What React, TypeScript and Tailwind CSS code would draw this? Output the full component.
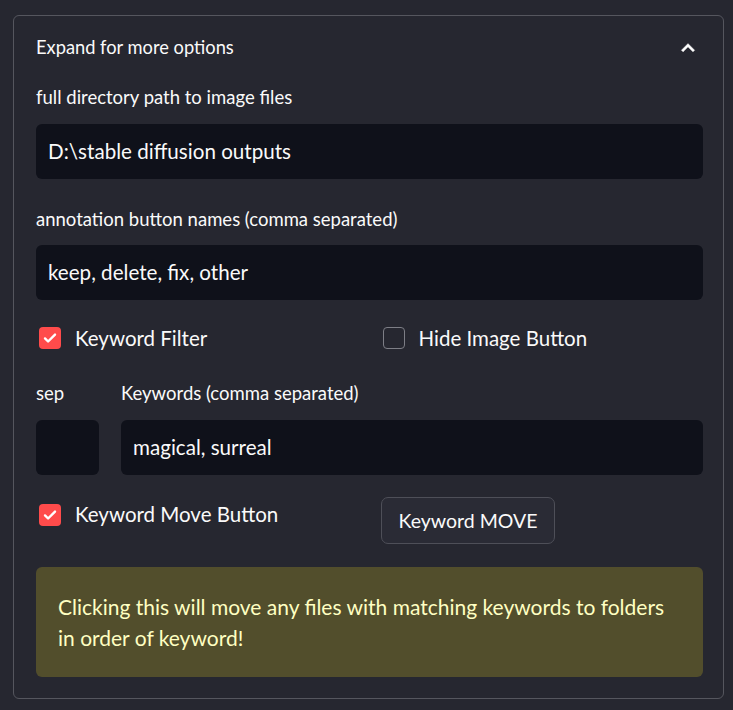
import React from 'react';

const font = { fontFamily: 'Lato, "Noto Sans", sans-serif' };

const Check: React.FC<{ checked?: boolean }> = ({ checked }) =>
  checked ? (
    <span className="flex h-[22px] w-[22px] shrink-0 items-center justify-center rounded-[4px] bg-[#ff4b4b]">
      <svg viewBox="0 0 16 16" className="h-[16px] w-[16px]" fill="none">
        <path d="M3 8.4l3.1 3.1L13 4.6" stroke="#ffffff" strokeWidth="2.4" strokeLinecap="round" strokeLinejoin="round" />
      </svg>
    </span>
  ) : (
    <span className="h-[22px] w-[22px] shrink-0 rounded-[4px] border-[1.5px] border-[#7d7e86] bg-[#262730]" />
  );

const Label: React.FC<{ children: React.ReactNode }> = ({ children }) => (
  <div className="mb-[15px] h-[24px] text-[18.5px] leading-[24px] text-[#fafafa]">{children}</div>
);

const Field: React.FC<{ value: string; className?: string }> = ({ value, className }) => (
  <div className={`flex h-[55px] items-center rounded-[6px] bg-[#0f111a] px-[12px] text-[20.6px] text-[#fafafa] ${className ?? ''}`}>
    {value}
  </div>
);

export default function App() {
  return (
    <div style={font} className="h-[710px] w-full bg-[#262730] px-[13px] pt-[15px]">
      <div className="w-[711px] rounded-[6px] border border-[#55565e]">
        {/* header */}
        <div className="flex h-[63px] items-center justify-between pl-[22px] pr-[22px]">
          <span className="text-[18.3px] text-[#fafafa]">Expand for more options</span>
          <svg viewBox="0 0 24 24" className="h-[26px] w-[26px]" fill="#ffffff" stroke="#ffffff" strokeWidth="0.6">
            <path d="M12 8l-6 6 1.41 1.41L12 10.83l4.59 4.58L18 14z" />
          </svg>
        </div>

        <div className="flex flex-col pl-[22px] pr-[20px] pb-[21px] pt-[6px]">
          <Label>full directory path to image files</Label>
          <Field value="D:\stable diffusion outputs" />

          <div className="mt-[28px]">
            <Label>annotation button names (comma separated)</Label>
            <div className="-mt-[1px]">
              <Field value="keep, delete, fix, other" />
            </div>
          </div>

          <div className="mt-[26px] flex h-[24px] gap-[20px]">
            <div className="flex flex-1 items-center gap-[14px] pl-[3px]">
              <Check checked />
              <span className="text-[20.5px] text-[#fafafa]">Keyword Filter</span>
            </div>
            <div className="flex flex-1 items-center gap-[14px] pl-[3px]">
              <Check />
              <span className="text-[20.5px] text-[#fafafa]">Hide Image Button</span>
            </div>
          </div>

          <div className="mt-[31px] flex gap-[22px]">
            <div className="w-[63px]">
              <Label>sep</Label>
              <Field value="" />
            </div>
            <div className="flex-1">
              <Label>Keywords (comma separated)</Label>
              <Field value="magical, surreal" />
            </div>
          </div>

          <div className="mt-[22px] flex gap-[20px]">
            <div className="flex flex-1 items-start gap-[14px] pl-[3px] pt-[7px]">
              <Check checked />
              <span className="-mt-[1px] text-[20.5px] leading-[22px] text-[#fafafa]">Keyword Move Button</span>
            </div>
            <div className="flex-1">
              <button className="h-[47px] w-[174px] rounded-[7px] border border-[#4e4f58] bg-[#2a2b35] text-[19.5px] text-[#fafafa]">
                Keyword MOVE
              </button>
            </div>
          </div>

          <div className="mt-[23px] rounded-[6px] bg-[#524e2c] px-[22px] py-[24px] text-[21px] leading-[31px] text-[#ffffc2]">
            Clicking this will move any files with matching keywords to folders in order of keyword!
          </div>
        </div>
      </div>
    </div>
  );
}
